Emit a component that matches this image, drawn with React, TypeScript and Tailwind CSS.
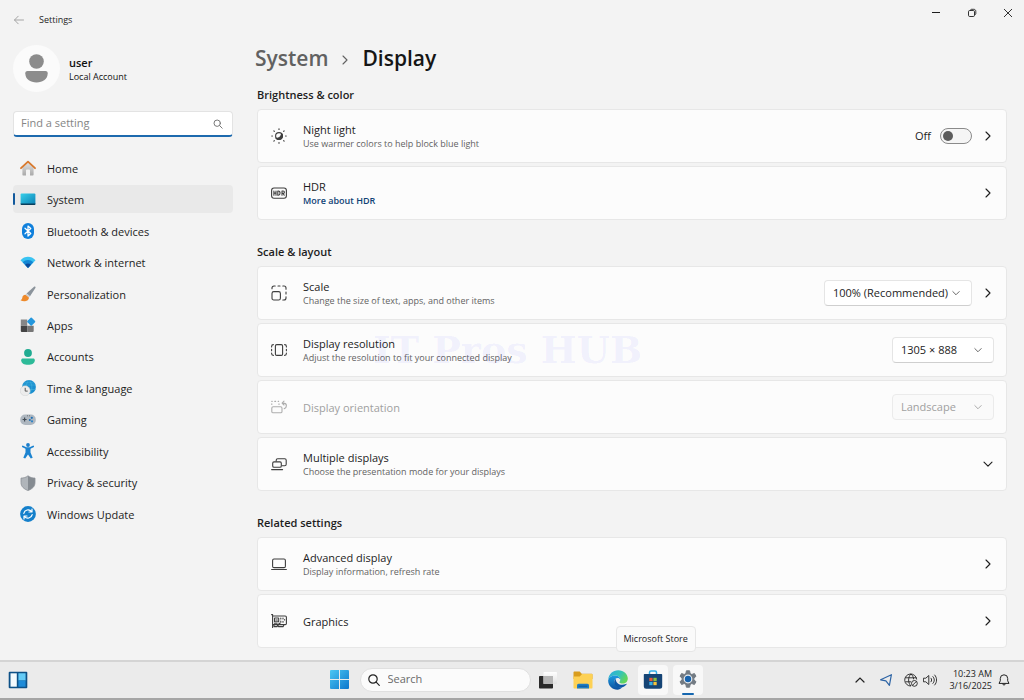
import { useState } from "react";
import type { ReactNode } from "react";
import clsx from "clsx";

const navItems = ["Home", "System", "Bluetooth & devices", "Network & internet", "Personalization", "Apps", "Accounts", "Time & language", "Gaming", "Accessibility", "Privacy & security", "Windows Update"];

const NavIcon = ({ name }: { name: string }) => {
  switch (name) {
    case "Home":
      return (
        <svg viewBox="0 0 16 16" className="size-4">
          <defs>
            <linearGradient id="house" x1="0" y1="0" x2="0" y2="1">
              <stop offset="0" stopColor="#e4e4e4" />
              <stop offset="1" stopColor="#a9a9a9" />
            </linearGradient>
          </defs>
          <path d="M2.4 7 8 2l5.6 5v7.4c0 .6-.4 1-1 1H10V10.6c0-.6-.3-1-.8-1H6.8c-.5 0-.8.4-.8 1v4.8H3.4c-.6 0-1-.4-1-1z" fill="url(#house)" />
          <path d="M1 8.2 8 1.6l7 6.6" fill="none" stroke="#d8792d" strokeWidth="1.8" strokeLinecap="round" strokeLinejoin="round" />
        </svg>
      );
    case "System":
      return (
        <svg viewBox="0 0 16 16" className="size-4">
          <defs>
            <linearGradient id="screen" x1="0" y1="0" x2="1" y2="1">
              <stop offset="0" stopColor="#38d0ea" />
              <stop offset="1" stopColor="#0a7fb4" />
            </linearGradient>
          </defs>
          <rect x=".6" y="2.6" width="14.8" height="11.4" rx="1" fill="url(#screen)" />
          <path d="M.6 12.4h14.8v.6a1 1 0 0 1-1 1H1.600a1 1 0 0 1-1-1z" fill="#0b3f5c" />
        </svg>
      );
    case "Bluetooth & devices":
      return (
        <svg viewBox="0 0 16 16" className="size-4">
          <rect x="2" y="0" width="12" height="16" rx="6" fill="#1080dc" />
          <path d="m5 5.200 5.800 5.300L8 13V3l2.800 2.500L5 10.800" fill="none" stroke="#fff" strokeWidth="1.200" strokeLinejoin="round" strokeLinecap="round" />
        </svg>
      );
    case "Network & internet":
      return (
        <svg viewBox="0 0 16 16" className="size-4">
          <path d="M.5 6.200C4.700 1.600 11.300 1.600 15.500 6.200L8 14z" fill="#39c3f2" />
          <path d="M2.700 8.300c3-3 7.600-3 10.600 0L8 14z" fill="#1487d4" />
          <path d="M5 10.700c1.700-1.700 4.300-1.700 6 0L8 14z" fill="#0b4a9c" />
        </svg>
      );
    case "Personalization":
      return (
        <svg viewBox="0 0 16 16" className="size-4">
          <path d="M14 .7c1-.6 1.900.2 1.400 1.300L10 10.200 6.600 7.600z" fill="#8b939b" />
          <path d="M10 10.200 6.600 7.600l-1 1.200 3.300 2.700z" fill="#c9ced3" />
          <path d="M5.500 8.700c-2.200.1-3 1.300-3.200 3-.1 1.300-.8 2-1.800 2.500 2.800 1.800 8.400 1.300 8.400-2.800z" fill="#ee8a2b" />
        </svg>
      );
    case "Apps":
      return (
        <svg viewBox="0 0 16 16" className="size-4">
          <path d="M.800 2.500h6.400v6.200H.8z" fill="#868686" />
          <path d="M.800 8.700h6.400V15H1.800a1 1 0 0 1-1-1z" fill="#444" />
          <path d="M7.200 8.700h6.500V14a1 1 0 0 1-1 1H7.200z" fill="#777" />
          <rect x="8.100" y="1.500" width="6.200" height="6.200" rx=".8" transform="rotate(45 11.200 4.600)" fill="#2497dd" />
        </svg>
      );
    case "Accounts":
      return (
        <svg viewBox="0 0 16 16" className="size-4">
          <circle cx="8" cy="4" r="3.900" fill="#1fab91" />
          <path d="M2.800 9.600h10.400c1 0 1.600.7 1.600 1.600 0 2.900-2.800 4.600-6.800 4.600s-6.800-1.700-6.800-4.600c0-.9.700-1.600 1.600-1.600z" fill="#2dba98" />
        </svg>
      );
    case "Time & language":
      return (
        <svg viewBox="0 0 16 16" className="size-4">
          <circle cx="9" cy="7" r="6.900" fill="#1b8fcf" />
          <path d="M2.500 5h13M4 2.800h10M9 .2c-3.500 3-3.500 9 0 13.500M9 .2c3.800 4 3.800 9.500 0 13.500M10 9.500h5.500" fill="none" stroke="#45b3dd" strokeWidth=".6" />
          <circle cx="5.200" cy="10.800" r="5" fill="#ececec" stroke="#c5c8ca" strokeWidth=".4" />
          <path d="M5.200 7.800v3.300h2.500" fill="none" stroke="#555" strokeWidth="1" />
        </svg>
      );
    case "Gaming":
      return (
        <svg viewBox="0 0 16 16" className="size-4">
          <rect x=".2" y="2.500" width="15.600" height="10.500" rx="5" fill="#aeb7c0" />
          <path d="M2.600 7.500h4M4.600 5.500v4" stroke="#444c54" strokeWidth="1.200" />
          <circle cx="11.800" cy="5.800" r="1.100" fill="#1b6fb6" />
          <circle cx="9.800" cy="8" r="1" fill="#1b6fb6" />
          <circle cx="12" cy="9.300" r="1.100" fill="#2a82c6" />
          <path d="M7 3.800h.9M9 3.800h.9" stroke="#555" strokeWidth=".8" />
        </svg>
      );
    case "Accessibility":
      return (
        <svg viewBox="0 0 16 16" className="size-4">
          <circle cx="8" cy="2" r="1.900" fill="#1c7ecb" />
          <path d="M2.800 3.400 6 5h4l3.200-1.600M8 5v4.500" fill="none" stroke="#1c83d0" strokeWidth="1.700" strokeLinecap="round" strokeLinejoin="round" />
          <path d="M5.500 5h5v4.500l2.200 5.200-1.900.9L8 11.500l-2.800 4.100-1.900-.9L5.500 9.500z" fill="#1c83d0" />
        </svg>
      );
    case "Privacy & security":
      return (
        <svg viewBox="0 0 16 16" className="size-4">
          <path d="M8 .8c2 1.600 4.300 2.300 7 2.300v4.400c0 4-2.800 6.500-7 8z" fill="#858b91" />
          <path d="M8 .8C6 2.400 3.700 3.100 1 3.100v4.400c0 4 2.800 6.500 7 8z" fill="#b0b5ba" />
          <path d="M8 .8c2 1.600 4.300 2.300 7 2.300v4.400c0 4-2.800 6.500-7 8-4.200-1.500-7-4-7-8V3.100c2.700 0 5-.7 7-2.300z" fill="none" stroke="#8b9197" strokeWidth=".8" />
        </svg>
      );
    default:
      return (
        <svg viewBox="0 0 16 16" className="size-4">
          <circle cx="8" cy="8" r="7.900" fill="#1580cb" />
          <path d="M3.800 7.300c.8-3.600 5.300-4.600 7.900-1.700M12.200 8.700c-.8 3.600-5.300 4.600-7.900 1.700M12 3v3H9M4 13v-3h3" fill="none" stroke="#fff" strokeWidth="1.200" strokeLinecap="round" strokeLinejoin="round" />
        </svg>
      );
  }
};

const LineIcon = ({ children }: { children: ReactNode }) => (
  <svg viewBox="0 0 16 16" className="size-4 shrink-0 opacity-85" fill="none" stroke="currentColor" strokeWidth="1.1" strokeLinecap="round" strokeLinejoin="round">
    {children}
  </svg>
);

const icons = {
  night: (
    <LineIcon>
      <circle cx="8" cy="8" r="3.4" />
      <path d="M10.600 5.500A3.600 3.600 0 1 1 5 10.100c3 .6 5.500-1.500 5.600-4.600z" fill="currentColor" />
      <path d="M8 .8v.6M8 14.600v.6M.8 8h.6M14.600 8h.6M2.900 2.900l.4.4M12.700 12.700l.4.4M2.900 13.100l.4-.4M12.700 3.300l.4-.4" strokeWidth="1.2" />
    </LineIcon>
  ),
  hdr: (
    <LineIcon>
      <rect x=".6" y="3" width="14.800" height="10.200" rx="2.400" />
      <path d="M2.900 6v4.200M5 6v4.200M2.900 8.100H5M6.800 6v4.200h.6c2.200 0 2.200-4.200 0-4.200zM11 10.200V6h1.200c1.600 0 1.600 2.400 0 2.400H11M12.200 8.400l1 1.800" />
    </LineIcon>
  ),
  scale: (
    <LineIcon>
      <rect x="1" y="6.600" width="8.400" height="8.400" rx="1.800" />
      <path d="M1 3.800V3a2 2 0 0 1 2-2h1.200M7 1h2M11.800 1H13a2 2 0 0 1 2 2v1.200M15 7v2M15 11.800V13a2 2 0 0 1-2 2h-1.200" />
    </LineIcon>
  ),
  resolution: (
    <LineIcon>
      <rect x="4.400" y="2.600" width="7.200" height="10.800" rx="1.400" />
      <path d="M2.400 2.600C1 2.600.6 3.400.6 4.500V5M.6 7.200v1.600M.6 11v.5c0 1.100.4 1.900 1.800 1.900M13.600 2.600c1.400 0 1.800.8 1.800 1.900V5M15.400 7.200v1.600M15.400 11v.5c0 1.100-.4 1.900-1.800 1.900" />
    </LineIcon>
  ),
  orientation: (
    <LineIcon>
      <rect x=".8" y="7.800" width="10.200" height="6" rx="1.400" />
      <path d="M.8 5.400v-.6M.8 2.400h.4M3.800 2.400h.8M7.200 2.400h.4M8 4.800v.6" />
      <path d="M13.200 9.800c1.500-.7 2.200-1.800 2.200-3.100 0-1.600-1.300-2.600-3.200-2.600h-.6M13 2.200l-1.900 1.900L13 6" />
    </LineIcon>
  ),
  multiple: (
    <LineIcon>
      <path d="M5.200 5V4.200c0-.9.600-1.500 1.500-1.500h7c.9 0 1.500.6 1.500 1.500v4c0 .9-.6 1.500-1.500 1.500h-2.500" />
      <rect x="1.700" y="5.900" width="8.600" height="5.400" rx="1.300" />
      <path d="M.6 13.600h11" />
    </LineIcon>
  ),
  laptop: (
    <LineIcon>
      <rect x="1.600" y="3" width="12.800" height="8.600" rx="1.400" />
      <path d="M.6 13.500h14.800" />
    </LineIcon>
  ),
  graphics: (
    <LineIcon>
      <path d="M.6 1.600h1V14.400M1.600 3h12.600c.8 0 1.200.5 1.200 1.200v6.200c0 .8-.5 1.200-1.200 1.200H1.600M3 11.600v2h3l.8-1.200.8 1.200h4.600l.8-2" />
      <rect x="3.500" y="5" width="4.200" height="3.800" rx=".4" />
      <path d="M4.800 7h1.600M9.800 5v1M12 5v1M13.600 6.500v.4M9.800 8v1.200M12 8.200v1M3.500 10.200h2.600M8 10.400h1" />
    </LineIcon>
  ),
};

const Chevron = ({ down, small }: { down?: boolean; small?: boolean }) => (
  <svg viewBox="0 0 10 10" className={clsx("shrink-0", small ? "size-2" : "size-2.5")} fill="none" stroke="currentColor" strokeWidth="1.1" strokeLinecap="round" strokeLinejoin="round">
    <path d={down ? "m1 3.200 4 4 4-4" : "m3 1 4 4-4 4"} />
  </svg>
);

type CardProps = {
  icon: ReactNode;
  title: string;
  text?: ReactNode;
  disabled?: boolean;
  children?: ReactNode;
};

const Card = ({ icon, title, text, disabled, children }: CardProps) => (
  <div
    className={clsx(
      "relative flex h-[54px] items-center rounded border border-[#e7e7e7] bg-[#fcfcfc] pr-3 pl-[13px]",
      disabled ? "text-[#a0a0a0]" : "text-[#1d1d1d]"
    )}
  >
    {icon}
    <div className="ml-4 flex-1 pt-0.5">
      <h3 className="text-[11px] leading-[14px]">{title}</h3>
      {text && <p className="text-[9px] leading-[14px] text-[#636363]">{text}</p>}
    </div>
    {children}
  </div>
);

const NextButton = ({ label, down }: { label: string; down?: boolean }) => (
  <button aria-label={label} className="flex size-3 items-center justify-center">
    <Chevron down={down} />
  </button>
);

type DropdownProps = { label: string; options: string[]; className: string; disabled?: boolean };

const Dropdown = ({ label, options, className, disabled }: DropdownProps) => (
  <div className={clsx("relative", className)}>
    <select
      aria-label={label}
      disabled={disabled}
      className={clsx(
        "block h-[26px] w-full appearance-none rounded border px-2 text-[11px] opacity-100",
        disabled ? "border-[#ebebeb] bg-[#fafafa] text-[#a0a0a0]" : "border-[#e5e5e5] border-b-[#cfcfcf] bg-white text-[#1d1d1d]"
      )}
    >
      {options.map((o) => (
        <option key={o}>{o}</option>
      ))}
    </select>
    <span className={clsx("pointer-events-none absolute inset-y-0 right-3 flex items-center", disabled ? "text-[#a0a0a0]" : "text-[#555]")}>
      <Chevron down small />
    </span>
  </div>
);

const Section = ({ title, children }: { title: string; children: ReactNode }) => (
  <section>
    <h2 className="mb-1.5 text-[11px] leading-4 font-semibold text-[#1d1d1d]">{title}</h2>
    <div className="flex flex-col gap-[3px]">{children}</div>
  </section>
);

const TitleBar = () => (
  <header className="flex h-10 items-start justify-between">
    <div className="flex items-center gap-[14px] pt-3 pl-[13px]">
      <button aria-label="Back" className="text-[#a5a5a5]">
        <svg viewBox="0 0 12 12" className="size-3" fill="none" stroke="currentColor" strokeLinecap="round" strokeLinejoin="round">
          <path d="M10.500 6H1.500M5.200 2.200 1.500 6l3.700 3.800" />
        </svg>
      </button>
      <h1 className="text-[9px] leading-4 text-[#1d1d1d]">Settings</h1>
    </div>
    <div className="flex h-[26px] text-[#1d1d1d]">
      <button aria-label="Minimize" className="flex w-8 items-center justify-center">
        <svg viewBox="0 0 10 10" className="size-2.5" fill="none" stroke="currentColor">
          <path d="M1 4.500h8" />
        </svg>
      </button>
      <button aria-label="Restore" className="flex w-10 items-center justify-center">
        <svg viewBox="0 0 10 10" className="size-2.5" fill="none" stroke="currentColor" strokeWidth=".9">
          <rect x="1.500" y="2.500" width="6" height="6" rx="1.200" />
          <path d="M3.500 2.500V2c0-.4.500-.7 1-.7h2.300c1.200 0 2 .8 2 2v2.400c0 .5-.4 1-1 1" />
        </svg>
      </button>
      <button aria-label="Close" className="flex w-8 items-center justify-center">
        <svg viewBox="0 0 10 10" className="size-2.5" fill="none" stroke="currentColor" strokeWidth=".9">
          <path d="m1 1 8 8M9 1 1 9" />
        </svg>
      </button>
    </div>
  </header>
);

const Sidebar = () => {
  const [active, setActive] = useState("System");

  return (
    <aside className="w-[220px] shrink-0 pt-[5px]">
      <div className="flex items-center gap-[9px]">
        <svg viewBox="0 0 47 47" className="size-[47px]">
          <circle cx="23.500" cy="23.500" r="23.500" fill="#fbfbfb" />
          <circle cx="23.500" cy="16.500" r="7.300" fill="#8c8c8c" />
          <path d="M14.500 26h18c1.300 0 2.200.9 2.200 2.200 0 5.800-4.800 9.200-11.200 9.200s-11.200-3.400-11.200-9.200c0-1.300.9-2.200 2.200-2.200z" fill="#8c8c8c" />
        </svg>
        <div className="pt-0.5 text-[#111]">
          <p className="text-[11px] leading-[14px] font-semibold">user</p>
          <p className="text-[9px] leading-[14px]">Local Account</p>
        </div>
      </div>
      <div className="mt-[19px] flex h-[26px] items-center overflow-hidden rounded border border-b-2 border-[#e3e3e3] border-b-[#1d6aae] bg-white pr-2 pl-[7px]">
        <input type="text" aria-label="Find a setting" placeholder="Find a setting" className="min-w-0 flex-1 text-[11px] outline-none placeholder:text-[#858585]" />
        <svg viewBox="0 0 12 12" className="size-3" fill="none" stroke="#777" strokeLinecap="round">
          <circle cx="5.200" cy="5.200" r="3.200" />
          <path d="m7.700 7.700 2.500 2.500" />
        </svg>
      </div>
      <nav className="mt-[17px] flex h-[374px] flex-col justify-between">
        {navItems.map((n) => (
          <a
            key={n}
            href="#"
            onClick={() => setActive(n)}
            className={clsx("relative flex h-7 items-center gap-[11px] rounded pl-[7px] text-[11px] text-[#1d1d1d]", active === n && "bg-[#e9e9e9]")}
          >
            {active === n && <span className="absolute top-2 left-0 h-3 w-[2px] rounded bg-[#12599c]" />}
            <NavIcon name={n} />
            <span className="pt-0.5">{n}</span>
          </a>
        ))}
      </nav>
    </aside>
  );
};

const DisplaySettings = () => {
  const [nightLight, setNightLight] = useState(false);

  return (
    <main className="min-w-0 flex-1 pt-[3px]">
      <div className="mb-[13px] flex h-[31px] items-center text-[21px] font-semibold">
        <a href="#" className="-ml-0.5 text-[#616161]">
          System
        </a>
        <span className="mx-3 pt-0.5 text-[#616161]">
          <Chevron />
        </span>
        <span className="text-[#151515]">Display</span>
      </div>
      <div className="flex flex-col gap-6">
        <Section title="Brightness & color">
          <Card icon={icons.night} title="Night light" text="Use warmer colors to help block blue light">
            <label className="mr-2.5 flex items-center gap-[9px] text-[11px]">
              {nightLight ? "On" : "Off"}
              <input
                type="checkbox"
                role="switch"
                checked={nightLight}
                onChange={(e) => setNightLight(e.target.checked)}
                className="flex h-4 w-8 appearance-none items-center rounded-full border border-[#8a8a8a] bg-[#f5f5f5] px-0.5 before:size-2.5 before:rounded-full before:bg-[#5c5c5c] checked:justify-end checked:bg-[#12599c] checked:before:bg-white"
              />
            </label>
            <NextButton label="Night light settings" />
          </Card>
          <Card
            icon={icons.hdr}
            title="HDR"
            text={
              <a href="#" className="font-semibold text-[#0f4275]">
                More about HDR
              </a>
            }
          >
            <NextButton label="HDR settings" />
          </Card>
        </Section>

        <Section title="Scale & layout">
          <Card icon={icons.scale} title="Scale" text="Change the size of text, apps, and other items">
            <Dropdown label="Scale" options={["100% (Recommended)", "125%", "150%", "175%"]} className="mr-2.5 w-[148px]" />
            <NextButton label="Custom scaling" />
          </Card>
          <Card icon={icons.resolution} title="Display resolution" text="Adjust the resolution to fit your connected display">
            <Dropdown label="Display resolution" options={["1305 × 888", "1280 × 800", "1024 × 768"]} className="w-[102px]" />
            <span aria-hidden="true" className="pointer-events-none absolute top-1 left-[115px] font-['DejaVu_Serif',serif] text-[38px] leading-[44px] font-bold whitespace-nowrap text-[#5a5aff]/7">
              IT Pros HUB
            </span>
          </Card>
          <Card icon={icons.orientation} title="Display orientation" disabled>
            <Dropdown label="Display orientation" options={["Landscape", "Portrait"]} className="w-[102px]" disabled />
          </Card>
          <Card icon={icons.multiple} title="Multiple displays" text="Choose the presentation mode for your displays">
            <NextButton label="Expand multiple displays" down />
          </Card>
        </Section>

        <Section title="Related settings">
          <Card icon={icons.laptop} title="Advanced display" text="Display information, refresh rate">
            <NextButton label="Advanced display" />
          </Card>
          <Card icon={icons.graphics} title="Graphics">
            <NextButton label="Graphics" />
          </Card>
        </Section>
      </div>
    </main>
  );
};

const TaskButton = ({ label, open, children }: { label: string; open?: boolean; children: ReactNode }) => (
  <button aria-label={label} className={clsx("relative flex h-[30px] w-[30px] items-center justify-center rounded", open && "bg-[#f8f8f8]")}>
    {children}
  </button>
);

const Taskbar = () => (
  <footer className="grid h-10 grid-cols-[1fr_auto_1fr] items-center border-t-2 border-b-2 border-t-[#d4d4d4] border-b-[#a5a5a5] bg-[#ebebeb] pb-px pl-2">
    <button aria-label="Widgets" className="w-5">
      <svg viewBox="0 0 20 18" className="h-[18px] w-5">
        <rect x=".7" y=".7" width="18.600" height="16.600" rx="1" fill="#0d5187" />
        <path d="M2.500 2.300h6.300v13.400H2.500z" fill="#f3fafd" />
        <path d="M10.400 2.300h7.200v7.200h-7.200z" fill="#64cbf6" />
        <path d="M10.400 9.500h7.200v6.200h-7.200z" fill="#1e8bd8" />
      </svg>
    </button>

    <div className="flex items-center">
      <button aria-label="Start" className="mr-[11px]">
        <svg viewBox="0 0 19 19" className="size-[19px]">
          <defs>
            <linearGradient id="start" x1="0" y1="0" x2="1" y2="1">
              <stop offset="0" stopColor="#4cc7f3" />
              <stop offset="1" stopColor="#0b76cc" />
            </linearGradient>
          </defs>
          <path d="M1 0h8v9H0V1a1 1 0 0 1 1-1zM10 0h8a1 1 0 0 1 1 1v8h-9zM0 10h9v9H1a1 1 0 0 1-1-1zM10 10h9v8a1 1 0 0 1-1 1h-8z" fill="url(#start)" />
        </svg>
      </button>
      <label className="mr-0.5 flex h-6 w-[171px] items-center gap-2 rounded-full border border-[#e0e0e0] bg-[#fbfbfb] pr-2 pl-[7px]">
        <svg viewBox="0 0 12 12" className="size-3" fill="none" stroke="#222" strokeWidth="1.200" strokeLinecap="round">
          <circle cx="5" cy="5" r="4.200" />
          <path d="m8.200 8.200 3.100 3.100" />
        </svg>
        <input type="text" aria-label="Search" placeholder="Search" className="min-w-0 flex-1 text-[11px] outline-none placeholder:text-[#6a6a6a]" />
      </label>
      <div className="flex gap-[5px]">
        <TaskButton label="Task view">
          <svg viewBox="0 0 20 18" className="h-[18px] w-5">
            <defs>
              <linearGradient id="pane" x1="0" y1="0" x2="0" y2="1">
                <stop offset="0" stopColor="#fff" />
                <stop offset="1" stopColor="#e2e2e2" />
              </linearGradient>
            </defs>
            <rect x="1" y="5" width="14" height="12.500" rx=".8" fill="#2a2a2a" />
            <rect x="5.500" y="1" width="13.500" height="12" rx=".8" fill="url(#pane)" />
            <path d="M5.500 5H15v8H5.500z" fill="#b7b7b7" />
          </svg>
        </TaskButton>
        <TaskButton label="File Explorer">
          <svg viewBox="0 0 20 18" className="h-[18px] w-5">
            <path d="M.5 1.500c0-.6.400-1 1-1h5.200l2 2.300h9.800c.6 0 1 .4 1 1V8H.5z" fill="#d99d1e" />
            <path d="M.5 5.500h6.200l2.400-2.400h9.400c.6 0 1 .4 1 1v12.400c0 .6-.4 1-1 1h-17c-.6 0-1-.4-1-1z" fill="#fdd155" />
            <path d="M4 17.500v-3c0-1 .6-1.700 1.600-1.700h8.800c1 0 1.600.7 1.600 1.700v3z" fill="#1e7cc4" />
            <path d="M6 15.200h8" stroke="#0f5a97" strokeLinecap="round" />
          </svg>
        </TaskButton>
        <TaskButton label="Microsoft Edge">
          <svg viewBox="0 0 20 20" className="size-5">
            <defs>
              <linearGradient id="wave" x1="0" y1="0" x2="1" y2=".5">
                <stop offset="0" stopColor="#2ba9e3" />
                <stop offset=".6" stopColor="#35c4b5" />
                <stop offset="1" stopColor="#62d65a" />
              </linearGradient>
              <linearGradient id="sea" x1="0" y1="0" x2="0" y2="1">
                <stop offset="0" stopColor="#1c9be0" />
                <stop offset="1" stopColor="#0c4f9e" />
              </linearGradient>
            </defs>
            <path d="M.3 9.500C.7 4 5 .2 10.200.2c5.500 0 9.600 4 9.600 8.300 0 3-2.200 5-5.200 5-2.200 0-3.600-.9-3.200-1.600.5-.7.900-1.300.9-2.400 0-2-2-4-5.200-4C4 5.500 1.500 7 .3 9.500z" fill="url(#wave)" />
            <path d="M.2 10C1 7 3.800 5.500 7.100 5.500c3.200 0 5.200 2 5.200 4-.4-1-1.600-1.600-2.600-1.600C7.300 8 6 10 6.400 12.200c.5 3.200 3.800 5.800 7.800 5.100-1.200 1.600-3 2.500-4.700 2.500C4 19.800-.3 15.500.2 10z" fill="url(#sea)" />
            <path d="M7.700 8.700c-1.600 1.500-2.100 4.300-.7 6.600 2.200 3.300 7.400 3.600 11.500-.8.400-.4 0-.8-.5-.6-4.900 2-10 .3-10.300-5.200z" fill="#0d58a6" />
          </svg>
        </TaskButton>
        <TaskButton label="Microsoft Store" open>
          <svg viewBox="0 0 20 20" className="size-5">
            <path d="M6.500 5V2.500C6.500 1.500 7 1 8 1h4c1 0 1.500.5 1.500 1.500V5" fill="none" stroke="#35b0e8" strokeWidth="1.500" />
            <path d="M1.500 4h17c.4 0 .7.3.7.7v11.800c0 1.300-1 2.300-2.300 2.300H3.100a2.300 2.300 0 0 1-2.300-2.300V4.700c0-.4.300-.7.700-.7z" fill="#154475" />
            <path d="M6.300 7.800h3.300v3.300H6.300z" fill="#ec5a35" />
            <path d="M10.400 7.800h3.300v3.300h-3.300z" fill="#8bc040" />
            <path d="M6.300 11.900h3.300v3.300H6.300z" fill="#38b0e6" />
            <path d="M10.400 11.900h3.300v3.300h-3.300z" fill="#f6c33b" />
          </svg>
          <span role="tooltip" className="absolute bottom-[43px] -left-[22px] rounded border border-[#e6e6e6] bg-[#fafafa] px-[7px] py-[5px] text-[9px] leading-[14px] whitespace-nowrap text-[#222]">
            Microsoft Store
          </span>
        </TaskButton>
        <TaskButton label="Settings" open>
          <svg viewBox="0 0 20 20" className="size-5">
            <path
              d="m8.400.8h3.200l.5 2.700 1.700 1 2.600-1 1.600 2.800-2.100 1.700v2l2.100 1.700-1.600 2.800-2.600-1-1.700 1-.5 2.700H8.400l-.5-2.700-1.700-1-2.600 1L2 11.700 4.100 10V8L2 6.300l1.600-2.800 2.600 1 1.700-1z"
              fill="#737b83"
              stroke="#737b83"
              strokeLinejoin="round"
            />
            <circle cx="10" cy="9" r="4.400" fill="#e9eef2" />
            <circle cx="10" cy="9" r="3.200" fill="#1763ad" />
          </svg>
          <span className="absolute bottom-0 left-[9px] h-0.5 w-3 rounded bg-[#1567b0]" />
        </TaskButton>
      </div>
    </div>

    <div className="flex items-center justify-end pr-[14px] text-[#222]">
      <button aria-label="Show hidden icons" className="mr-[15px]">
        <svg viewBox="0 0 10 10" className="size-2.5" fill="none" stroke="currentColor" strokeWidth="1.200" strokeLinecap="round">
          <path d="m1 7 4-4 4 4" />
        </svg>
      </button>
      <button aria-label="Location" className="mr-3">
        <svg viewBox="0 0 12 12" className="size-3" fill="none" stroke="#2d64a5" strokeWidth="1.200" strokeLinejoin="round">
          <path d="M11.400.7.600 5.800l5.300 1 3.500 4.500z" />
        </svg>
      </button>
      <button aria-label="Network" className="mr-[5px]">
        <svg viewBox="0 0 14 14" className="size-3.5" fill="none" stroke="currentColor" strokeWidth=".9">
          <path d="M12.700 6.500A6 6 0 1 0 7 13" />
          <path d="M1.500 4.800h11M1.500 8.800h5.500M7 .9c-3.200 3.200-3.200 9 0 12.100M7 .9c1.700 1.700 2.500 3.500 2.600 5.400" />
          <circle cx="10.400" cy="10.400" r="2.900" />
          <path d="m8.400 12.400 4-4" />
        </svg>
      </button>
      <button aria-label="Volume">
        <svg viewBox="0 0 14 14" className="size-3.5" fill="none" stroke="currentColor" strokeWidth=".9" strokeLinecap="round" strokeLinejoin="round">
          <path d="M.8 5.200h2l3-2.700v9l-3-2.700h-2zM8 5.200c.9 1 .9 2.600 0 3.600M9.900 3.600c1.900 2 1.900 4.800 0 6.800M11.700 2c2.600 3 2.600 7 0 10" />
        </svg>
      </button>
      <div className="ml-3 text-right text-[9px] leading-3">
        <p>10:23 AM</p>
        <p>3/16/2025</p>
      </div>
      <button aria-label="Notifications" className="ml-1.5">
        <svg viewBox="0 0 12 12" className="size-3" fill="none" stroke="currentColor" strokeLinejoin="round">
          <path d="M6 .8a3.700 3.700 0 0 0-3.700 3.700v2.300L1 9.400h10L9.700 6.800V4.500A3.700 3.700 0 0 0 6 .8zM4.600 9.600c.2 1.900 2.600 1.900 2.800 0" />
        </svg>
      </button>
    </div>
  </footer>
);

const App = () => {
  return (
    <div className="flex min-h-screen flex-col bg-[#f3f3f3] font-['Open_Sans','Noto_Sans',sans-serif]">
      <TitleBar />
      <div className="flex flex-1 gap-6 pr-[17px] pl-[13px]">
        <Sidebar />
        <DisplaySettings />
      </div>
      <Taskbar />
    </div>
  );
};

export default App;
